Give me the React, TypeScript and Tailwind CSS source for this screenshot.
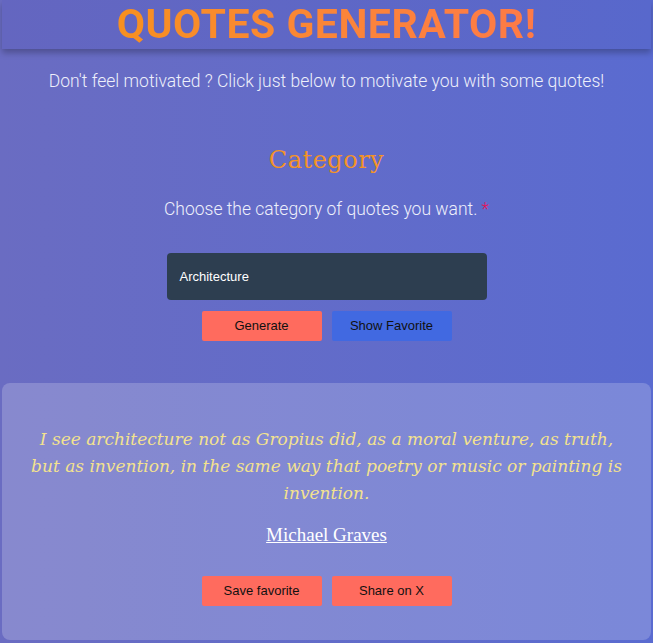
export default function App() {
  return (
    <div className="min-h-[643px] w-full bg-gradient-to-r from-[#6a6cc2] to-[#5a6bd0] font-['Roboto',sans-serif]">
      {/* header */}
      <div className="mx-[2px] flex h-[49px] items-center justify-center bg-gradient-to-r from-[#6466c0] to-[#5868cc] shadow-[0_4px_6px_rgba(0,0,0,0.25)]">
        <h1 className="bg-gradient-to-r from-[#f7901f] to-[#fe7a47] bg-clip-text text-[41px] font-bold leading-none tracking-[0.5px] text-transparent">
          QUOTES GENERATOR!
        </h1>
      </div>

      {/* intro */}
      <p className="mt-[20px] text-center text-[17.5px] font-light leading-[24px] text-[#eef0fb]">
        Don't feel motivated ? Click just below to motivate you with some quotes!
      </p>

      {/* category */}
      <h2 className="mt-[51px] text-center font-['DejaVu_Serif',serif] text-[24px] leading-[32px] tracking-[0.5px] text-[#f39328]">
        Category
      </h2>
      <p className="mt-[21px] text-center text-[17.5px] font-light leading-[24px] text-[#eef0fb]">
        Choose the category of quotes you want. <span className="text-[#e4145a]">*</span>
      </p>

      <div className="mt-[32px] flex flex-col items-center">
        <div className="flex h-[47px] w-[320px] items-center rounded-[4px] bg-[#2d3e50] px-[13px] font-['Liberation_Sans',sans-serif] text-[13px] text-white">
          Architecture
        </div>
        <div className="mt-[11px] flex gap-[10px] font-['Liberation_Sans',sans-serif] text-[13px] text-[#111]">
          <button className="h-[30px] w-[120px] rounded-[2px] bg-[#ff6b5e]">Generate</button>
          <button className="h-[30px] w-[120px] rounded-[2px] bg-[#4169e1]">Show Favorite</button>
        </div>
      </div>

      {/* quote card */}
      <div className="mx-[2px] mt-[42px] flex h-[257px] flex-col items-center rounded-[8px] bg-white/20 px-[22px] pt-[43px]">
        <p className="text-center font-['DejaVu_Serif',serif] text-[17px] italic leading-[27px] text-[#f3e28e]">
          I see architecture not as Gropius did, as a moral venture, as truth, but as invention, in the same way that poetry or music or painting is invention.
        </p>
        <a className="mt-[17px] font-['Liberation_Serif',serif] text-[19px] leading-[22px] text-white underline">
          Michael Graves
        </a>
        <div className="mt-[30px] flex gap-[10px] font-['Liberation_Sans',sans-serif] text-[13px] text-[#111]">
          <button className="h-[30px] w-[120px] rounded-[2px] bg-[#ff6b5e]">Save favorite</button>
          <button className="h-[30px] w-[120px] rounded-[2px] bg-[#ff6b5e]">Share on X</button>
        </div>
      </div>
    </div>
  );
}
